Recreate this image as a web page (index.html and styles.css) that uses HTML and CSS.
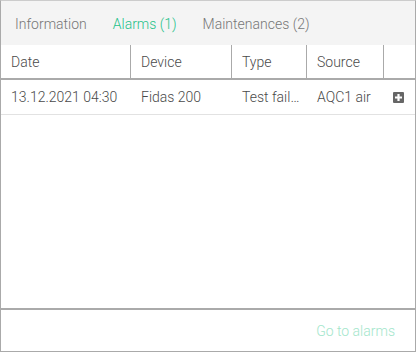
FILE: index.html
```html
<!DOCTYPE html>
<html lang="en">
<head>
  <meta charset="UTF-8" />
  <title>Alarms</title>
  <link rel="stylesheet" href="styles.css">
</head>
<body>
  <div class="widget">
    <div class="tabs">
      <div class="tab">Information</div>
      <div class="tab active">Alarms (1)</div>
      <div class="tab">Maintenances (2)</div>
    </div>

    <div class="row head">
      <div class="cell c-date">Date</div>
      <div class="cell c-device">Device</div>
      <div class="cell c-type">Type</div>
      <div class="cell c-source">Source</div>
      <div class="cell c-act"></div>
    </div>

    <div class="row item">
      <div class="cell c-date">13.12.2021 04:30</div>
      <div class="cell c-device">Fidas 200</div>
      <div class="cell c-type">Test failure</div>
      <div class="cell c-source">AQC1 air</div>
      <div class="cell c-act">
        <svg class="plus" width="11" height="11" viewBox="0 0 11 11">
          <rect x="0" y="0" width="11" height="11" rx="1" fill="#666"/>
          <path d="M5.5 2v7M2 5.5h7" stroke="#fff" stroke-width="2.2"/>
        </svg>
      </div>
    </div>

    <div class="spacer"></div>

    <div class="footer">
      <span class="link">Go to alarms</span>
    </div>
  </div>
</body>
</html>
```

FILE: styles.css
```css
* {
  margin: 0;
  padding: 0;
  box-sizing: border-box;
}

body {
  background: #fff;
  font-family: Roboto, "Liberation Sans", sans-serif;
  font-size: 14px;
  font-weight: 300;
  color: #4a4a4a;
}

.widget {
  width: 416px;
  height: 352px;
  display: flex;
  flex-direction: column;
  border: 1px solid #aaa;
  border-top-color: #ccc;
}

.tabs {
  height: 44px;
  background: #f4f4f4;
  display: flex;
  align-items: center;
  gap: 26px;
  padding-left: 14px;
  padding-top: 1px;
}

.tab {
  color: #777;
}

.tab.active {
  color: #1fc28a;
}

.row {
  display: flex;
}

.cell {
  padding-left: 10px;
  white-space: nowrap;
  overflow: hidden;
  text-overflow: ellipsis;
  display: flex;
  align-items: center;
  border-left: 1px solid transparent;
}

.row .cell:first-child {
  border-left: none;
}

.c-date { width: 129px; }
.c-device { width: 101px; }
.c-type { width: 75px; }
.c-source { width: 77px; }
.c-act { flex: 1; padding-left: 9px; }

.head {
  height: 35px;
  border-bottom: 2px solid #aaa;
}

.head .cell + .cell {
  border-left-color: #aaa;
}

.head .cell {
  padding-top: 1px;
}

.item {
  height: 35px;
  border-bottom: 1px solid #e2e2e2;
}

.item .c-type {
  display: block;
  line-height: 34px;
  padding-right: 4px;
}

.plus {
  display: block;
}

.spacer {
  flex: 1;
  border-bottom: 2px solid #aaa;
}

.footer {
  height: 41px;
  display: flex;
  align-items: center;
  justify-content: flex-end;
  padding-right: 20px;
}

.link {
  color: #a3e6cb;
}
```
